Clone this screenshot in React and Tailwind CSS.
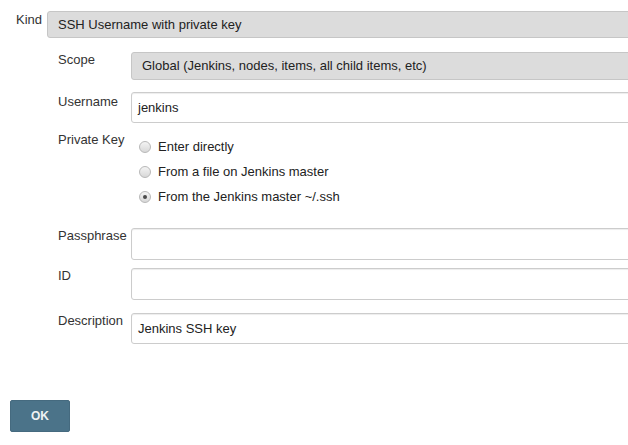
import React from "react";

function Radio({ checked }) {
  return (
    <span className="relative inline-block w-[12px] h-[12px] rounded-full border border-[#b8b8b8] bg-gradient-to-b from-[#f4f4f4] to-[#d8d8d8] shrink-0">
      {checked && (
        <span className="absolute left-[3px] top-[3px] w-[4px] h-[4px] rounded-full bg-[#4a4a4a]" />
      )}
    </span>
  );
}

function Row({ label, mt, labelPt = "pt-[2px]", children }) {
  return (
    <div className={`flex ${mt}`}>
      <div className={`w-[73px] shrink-0 leading-[15px] ${labelPt}`}>{label}</div>
      <div className="flex-1">{children}</div>
    </div>
  );
}

export default function App() {
  const input =
    "h-full w-full border border-[#cccccc] rounded-[3px] bg-white shadow-[inset_0_1px_1px_rgba(0,0,0,0.075)] flex items-center px-[6px] text-[#222]";
  const select =
    "h-full w-full border border-[#c6c6c6] rounded-[3px] bg-[#dcdcdc] flex items-center pl-[10px] text-[#222]";
  return (
    <div
      className="w-[628px] h-[445px] overflow-hidden bg-white text-[13px] text-[#333]"
      style={{ fontFamily: '"Liberation Sans", Arial, sans-serif' }}
    >
      <div className="w-[680px] pt-[11px]">
        <div className="flex pl-[16px]">
          <div className="w-[31px] shrink-0 leading-[15px] pt-[1px]">Kind</div>
          <div className="flex-1 h-[27px]">
            <div className={select}>SSH Username with private key</div>
          </div>
        </div>
        <div className="pl-[58px]">
          <Row label="Scope" mt="mt-[14px]" labelPt="pt-0">
            <div className="h-[28px]">
              <div className={select}>Global (Jenkins, nodes, items, all child items, etc)</div>
            </div>
          </Row>
          <Row label="Username" mt="mt-[12px]">
            <div className="h-[31px]">
              <div className={input}>jenkins</div>
            </div>
          </Row>
          <Row label="Private Key" mt="mt-[9px]" labelPt="pt-0">
            <div className="flex flex-col pl-[8px] pt-[2px]">
              {[
                ["Enter directly", false],
                ["From a file on Jenkins master", false],
                ["From the Jenkins master ~/.ssh", true],
              ].map(([t, c]) => (
                <div key={t} className="h-[25px] flex items-center gap-[7px]">
                  <Radio checked={c} />
                  <span className="text-[#222]">{t}</span>
                </div>
              ))}
            </div>
          </Row>
          <Row label="Passphrase" mt="mt-[19px]" labelPt="pt-0">
            <div className="h-[32px]">
              <div className={input}></div>
            </div>
          </Row>
          <Row label="ID" mt="mt-[8px]" labelPt="pt-0">
            <div className="h-[32px]">
              <div className={input}></div>
            </div>
          </Row>
          <Row label="Description" mt="mt-[13px]" labelPt="pt-0">
            <div className="h-[31px]">
              <div className={input}>Jenkins SSH key</div>
            </div>
          </Row>
        </div>
        <div className="pl-[10px] mt-[56px]">
          <button className="w-[60px] h-[32px] rounded-[2px] bg-[#4b7389] text-[#eef2f4] font-bold text-[12px] border border-[#456a7f]">
            OK
          </button>
        </div>
      </div>
    </div>
  );
}
